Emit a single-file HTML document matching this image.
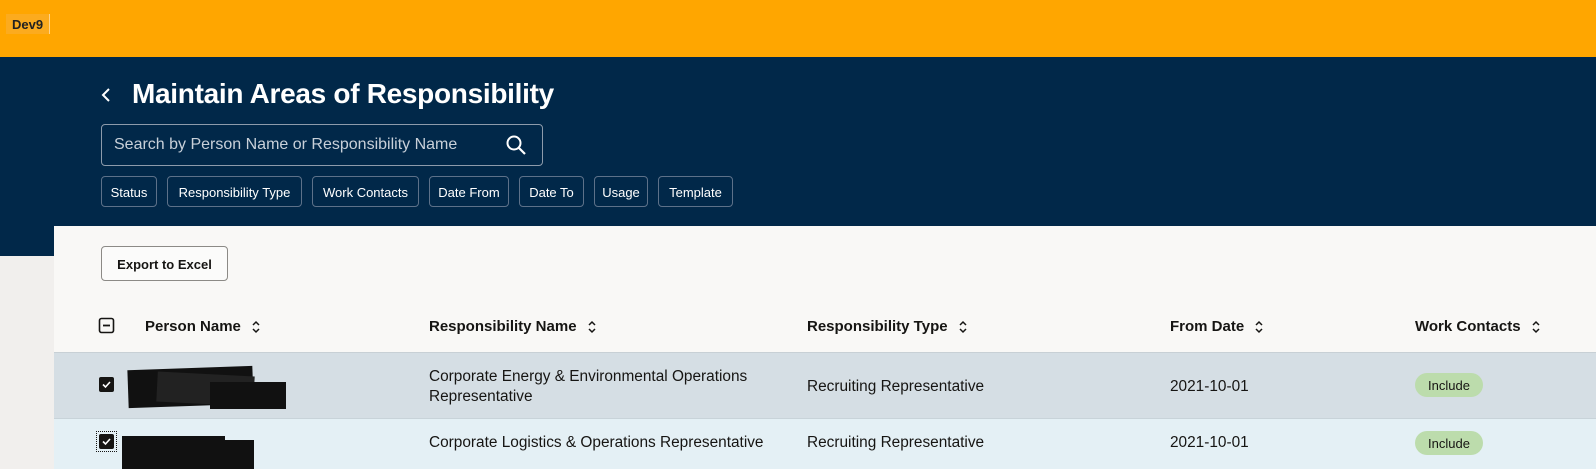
<!DOCTYPE html>
<html><head><style>
*{margin:0;padding:0;box-sizing:border-box}
body{width:1596px;height:469px;overflow:hidden;background:#f1efed;font-family:"Liberation Sans",sans-serif;position:relative;color:#161513}
.a{position:absolute}
.top{left:0;top:0;width:1596px;height:57px;background:#ffa600}
.dev{left:6px;top:14px;width:44px;height:20px;background:#fcab1e;border-right:1px solid #ffd38a;font-size:13px;font-weight:bold;color:#222;padding:3px 0 0 6px}
.nav{left:0;top:57px;width:1596px;height:199px;background:#012849}
.title{left:132px;top:78px;color:#fff;font-size:28px;font-weight:bold;letter-spacing:-0.3px}
.search{left:101px;top:124px;width:442px;height:42px;border:1px solid #8d9bab;border-radius:4px;color:#c8d0d9;font-size:16px;padding:11px 0 0 12px}
.chip{top:176px;height:31px;border:1px solid #5d7189;border-radius:4px;color:#fff;font-size:13px;padding:8px 0 0 0;text-align:center}
.panel{left:54px;top:226px;width:1542px;height:243px;background:#f9f8f6}
.btn{left:101px;top:246px;width:127px;height:35px;border:1px solid #8c8a86;border-radius:4px;font-size:13px;font-weight:bold;text-align:center;padding-top:10px;background:#fbfbfa}
.h{top:318px;font-size:15px;font-weight:bold}
.sort{display:inline-block;margin-left:10px;vertical-align:middle}
.r1{left:54px;top:352px;width:1542px;height:66px;background:#d5dee4;border-top:1px solid #c8d0d5}
.r2{left:54px;top:418px;width:1542px;height:51px;background:#e4f0f5;border-top:1px solid #c8d3d9}
.t{font-size:15.4px;color:#161513}
.cb{width:15px;height:15px;background:#161513;border-radius:2px}
.pill{width:68px;height:24px;border-radius:12px;background:#bcdcac;font-size:13px;text-align:center;padding-top:5px}
.blk{background:#111}
</style></head><body>
<div class="a top"></div>
<div class="a dev">Dev9</div>
<div class="a nav"></div>
<svg class="a" style="left:100px;top:86px" width="12" height="18"><path d="M9 3 L3 9 L9 15" stroke="#fff" stroke-width="2" fill="none"/></svg>
<div class="a title">Maintain Areas of Responsibility</div>
<div class="a search">Search by Person Name or Responsibility Name</div>
<svg class="a" style="left:505px;top:134px" width="22" height="22"><circle cx="9" cy="9" r="6.5" stroke="#fff" stroke-width="2" fill="none"/><path d="M14 14 L20 20" stroke="#fff" stroke-width="2.2"/></svg>
<div class="a chip" style="left:101px;width:56px">Status</div>
<div class="a chip" style="left:167px;width:135px">Responsibility Type</div>
<div class="a chip" style="left:312px;width:107px">Work Contacts</div>
<div class="a chip" style="left:429px;width:80px">Date From</div>
<div class="a chip" style="left:519px;width:65px">Date To</div>
<div class="a chip" style="left:594px;width:54px">Usage</div>
<div class="a chip" style="left:658px;width:75px">Template</div>
<div class="a panel"></div>
<div class="a btn">Export to Excel</div>
<svg class="a" style="left:98px;top:317px" width="18" height="18"><rect x="1.5" y="1.5" width="14" height="14" rx="2" stroke="#161513" stroke-width="1.6" fill="none"/><path d="M5 8.5 H12" stroke="#161513" stroke-width="1.8"/></svg>
<div class="a h" style="left:145px">Person Name<svg class="sort" width="10" height="14"><path d="M2 5 L5 2 L8 5 M2 9 L5 12 L8 9" stroke="#161513" stroke-width="1.5" fill="none"/></svg></div>
<div class="a h" style="left:429px">Responsibility Name<svg class="sort" width="10" height="14"><path d="M2 5 L5 2 L8 5 M2 9 L5 12 L8 9" stroke="#161513" stroke-width="1.5" fill="none"/></svg></div>
<div class="a h" style="left:807px">Responsibility Type<svg class="sort" width="10" height="14"><path d="M2 5 L5 2 L8 5 M2 9 L5 12 L8 9" stroke="#161513" stroke-width="1.5" fill="none"/></svg></div>
<div class="a h" style="left:1170px">From Date<svg class="sort" width="10" height="14"><path d="M2 5 L5 2 L8 5 M2 9 L5 12 L8 9" stroke="#161513" stroke-width="1.5" fill="none"/></svg></div>
<div class="a h" style="left:1415px">Work Contacts<svg class="sort" width="10" height="14"><path d="M2 5 L5 2 L8 5 M2 9 L5 12 L8 9" stroke="#161513" stroke-width="1.5" fill="none"/></svg></div>
<div class="a r1"></div>
<div class="a r2"></div>
<div class="a cb" style="left:99px;top:377px"></div>
<svg class="a" style="left:99px;top:377px" width="15" height="15"><path d="M4 7.5 L6.5 10 L11 5" stroke="#fff" stroke-width="1.6" fill="none"/></svg>
<div class="a blk" style="left:128px;top:368px;width:125px;height:38px;transform:rotate(-2deg)"></div>
<div class="a blk" style="left:157px;top:374px;width:97px;height:30px;background:#222;transform:rotate(3deg)"></div>
<div class="a blk" style="left:210px;top:382px;width:76px;height:27px"></div>
<div class="a t" style="left:429px;top:367px;line-height:20px">Corporate Energy &amp; Environmental Operations<br>Representative</div>
<div class="a t" style="left:807px;top:378px">Recruiting Representative</div>
<div class="a t" style="left:1170px;top:378px">2021-10-01</div>
<div class="a pill" style="left:1415px;top:373px">Include</div>
<div class="a" style="left:96px;top:431px;width:21px;height:21px;border:1px dotted #161513"></div>
<div class="a cb" style="left:99px;top:434px"></div>
<svg class="a" style="left:99px;top:434px" width="15" height="15"><path d="M4 7.5 L6.5 10 L11 5" stroke="#fff" stroke-width="1.6" fill="none"/></svg>
<div class="a blk" style="left:122px;top:436px;width:103px;height:33px"></div>
<div class="a blk" style="left:170px;top:440px;width:84px;height:29px"></div>
<div class="a t" style="left:429px;top:434px">Corporate Logistics &amp; Operations Representative</div>
<div class="a t" style="left:807px;top:434px">Recruiting Representative</div>
<div class="a t" style="left:1170px;top:434px">2021-10-01</div>
<div class="a pill" style="left:1415px;top:431px">Include</div>
</body></html>
